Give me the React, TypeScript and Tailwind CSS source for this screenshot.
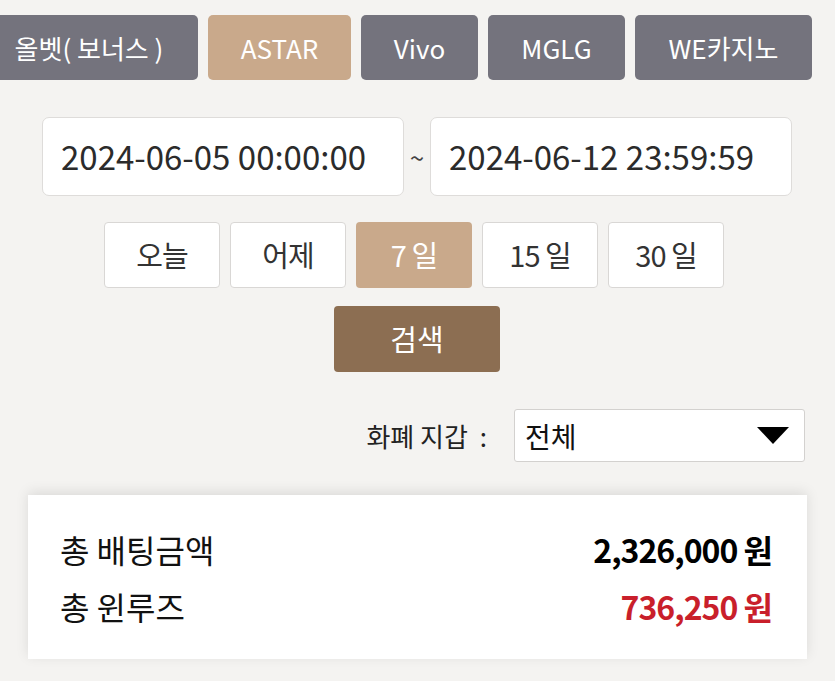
import React from "react";

const font = { fontFamily: '"Noto Sans CJK KR", "Noto Sans", sans-serif' };

export default function App() {
  const tabs = [
    { label: "올벳( 보너스 )", w: "w-[218px]", active: false },
    { label: "ASTAR", w: "w-[143px]", active: true },
    { label: "Vivo", w: "w-[117px]", active: false },
    { label: "MGLG", w: "w-[137px]", active: false },
    { label: "WE카지노", w: "w-[177px]", active: false },
  ];
  const periods = ["오늘", "어제", "7 일", "15 일", "30 일"];
  return (
    <div className="w-[835px] h-[681px] bg-[#f4f3f1] overflow-hidden" style={font}>
      <div className="flex gap-[10px] pt-[15px] -ml-[20px]">
        {tabs.map((t) => (
          <div
            key={t.label}
            className={`${t.w} shrink-0 h-[65px] rounded-[5px] flex items-center justify-center text-[26px] text-white ${
              t.active ? "bg-[#c9a98b]" : "bg-[#74737d]"
            }`}
          >
            {t.label}
          </div>
        ))}
      </div>

      <div className="flex items-center mt-[37px] ml-[42px]">
        <div className="w-[362px] h-[79px] bg-white border border-[#dedcda] rounded-[7px] flex items-center pl-[18px] text-[33px] text-[#2b2b2b]">
          2024-06-05 00:00:00
        </div>
        <div className="w-[26px] text-center text-[26px] leading-none text-[#444]">~</div>
        <div className="w-[362px] h-[79px] bg-white border border-[#dedcda] rounded-[7px] flex items-center pl-[18px] text-[33px] text-[#2b2b2b]">
          2024-06-12 23:59:59
        </div>
      </div>

      <div className="flex gap-[10px] mt-[26px] ml-[104px]">
        {periods.map((p, i) => (
          <div
            key={p}
            className={`w-[116px] h-[66px] rounded-[4px] flex items-center justify-center text-[29px] tracking-[-1px] ${
              i === 2
                ? "bg-[#c9a98b] text-white"
                : "bg-white border border-[#d9d7d5] text-[#333]"
            }`}
          >
            {p}
          </div>
        ))}
      </div>

      <div className="flex mt-[18px] ml-[334px]">
        <div className="w-[166px] h-[66px] rounded-[4px] bg-[#8c6e52] text-white text-[29px] flex items-center justify-center">
          검색
        </div>
      </div>

      <div className="flex items-center justify-end mt-[37px] pr-[30px] gap-[27px]">
        <div className="text-[26px] text-[#222]">화폐 지갑 <span className="ml-[6px]">:</span></div>
        <div className="w-[291px] h-[53px] bg-white border border-[#d3d1cf] rounded-[3px] flex items-center justify-between pl-[10px] pr-[15px]">
          <span className="text-[28px] text-[#111]">전체</span>
          <svg width="32" height="17" viewBox="0 0 32 17">
            <polygon points="0,0 32,0 16,17" fill="#000" />
          </svg>
        </div>
      </div>

      <div className="mt-[33px] mx-[28px] h-[164px] bg-white shadow-[0_-3px_12px_rgba(0,0,0,0.10)] py-[25px] pl-[32px] pr-[35px] flex flex-col">
        <div className="h-[57px] flex items-center justify-between">
          <span className="text-[32px] text-[#111]">총 배팅금액</span>
          <span className="text-[32px] font-bold text-[#000] tracking-[-1px]">2,326,000 원</span>
        </div>
        <div className="h-[57px] flex items-center justify-between">
          <span className="text-[32px] text-[#111]">총 윈루즈</span>
          <span className="text-[32px] font-bold text-[#c91f2b] tracking-[-1px]">736,250 원</span>
        </div>
      </div>
    </div>
  );
}
